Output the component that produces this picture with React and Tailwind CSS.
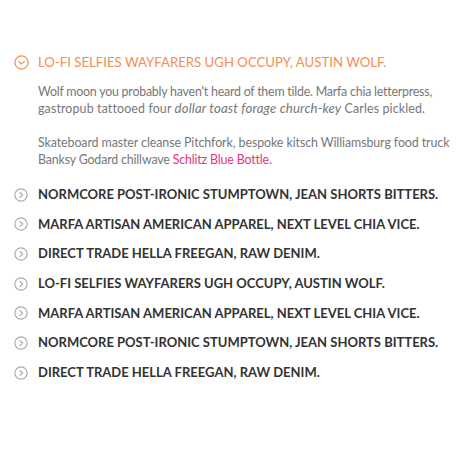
const items = [
  "NORMCORE POST-IRONIC STUMPTOWN, JEAN SHORTS BITTERS.",
  "MARFA ARTISAN AMERICAN APPAREL, NEXT LEVEL CHIA VICE.",
  "DIRECT TRADE HELLA FREEGAN, RAW DENIM.",
  "LO-FI SELFIES WAYFARERS UGH OCCUPY, AUSTIN WOLF.",
  "MARFA ARTISAN AMERICAN APPAREL, NEXT LEVEL CHIA VICE.",
  "NORMCORE POST-IRONIC STUMPTOWN, JEAN SHORTS BITTERS.",
  "DIRECT TRADE HELLA FREEGAN, RAW DENIM.",
];

function Chevron({ down, className }) {
  return (
    <svg viewBox="0 0 16 16" className={className} fill="none" stroke="currentColor" strokeWidth="1.3">
      <circle cx="8" cy="8" r="7" />
      {down ? (
        <path d="M5 6.8 L8 9.8 L11 6.8" strokeLinecap="round" strokeLinejoin="round" />
      ) : (
        <path d="M6.8 5 L9.8 8 L6.8 11" strokeLinecap="round" strokeLinejoin="round" />
      )}
    </svg>
  );
}

export default function App() {
  return (
    <div className="w-[460px] h-[460px] bg-white pt-[53px] pl-[14px] font-['Lato','Open_Sans',sans-serif]">
      <div className="flex items-center gap-[9px] text-[#f58d55]">
        <Chevron down className="w-[15px] h-[15px]" />
        <span className="text-[13.2px]">LO-FI SELFIES WAYFARERS UGH OCCUPY, AUSTIN WOLF.</span>
      </div>
      <div className="pl-[24px] pt-[10px] text-[12.4px] leading-[17px] text-[#777] whitespace-nowrap">
        <p>
          <span className="tracking-[-0.22px]">
            Wolf moon you probably haven't heard of them tilde. Marfa chia letterpress,
          </span>
          <br />
          <span className="tracking-[0.14px]">
            gastropub tattooed four <em className="text-[13.2px]">dollar toast forage church-key</em> Carles pickled.
          </span>
        </p>
        <p className="mt-[17px]">
          <span className="tracking-[-0.08px]">
            Skateboard master cleanse Pitchfork, bespoke kitsch Williamsburg food truck
          </span>
          <br />
          <span className="tracking-[-0.16px]">
            Banksy Godard chillwave <span className="text-[#e8317a]">Schlitz Blue Bottle</span>.
          </span>
        </p>
      </div>
      <ul className="mt-[12px] flex flex-col">
        {items.map((t, i) => (
          <li key={i} className="h-[29.7px] flex items-center gap-[10px] text-[#333]">
            <Chevron className="w-[14px] h-[14px] text-[#aaa]" />
            <span className="text-[13px] font-bold">{t}</span>
          </li>
        ))}
      </ul>
    </div>
  );
}
